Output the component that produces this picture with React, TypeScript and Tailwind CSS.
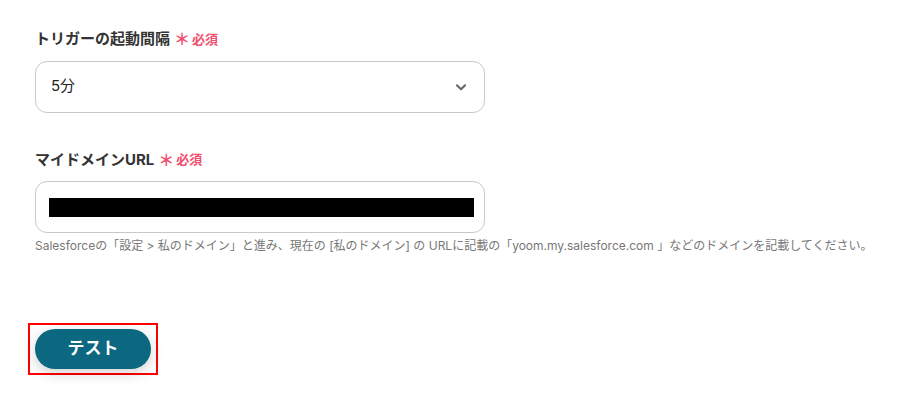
import React from 'react';

const font = { fontFamily: 'Inter, "Noto Sans CJK JP", sans-serif' };

function Required() {
  return (
    <span className="ml-1 inline-flex items-center gap-0.5 text-[13px] font-bold text-[#f0506e]">
      <span className="text-[16px] font-bold leading-none">＊</span>
      必須
    </span>
  );
}

export default function App() {
  return (
    <div className="min-h-[405px] w-[923px] bg-white pl-[35px] pt-[28px]" style={font}>
      {/* Trigger interval */}
      <div className="flex items-center text-[15px] font-bold text-[#333]">
        トリガーの起動間隔
        <Required />
      </div>
      <div className="mt-[10px] flex h-[52px] w-[450px] items-center justify-between rounded-[12px] border border-[#c8c8c8] pl-[15px] pr-[16px] text-[15px] text-[#222]">
        <span>5分</span>
        <svg width="14" height="14" viewBox="0 0 24 24" fill="none" stroke="#666" strokeWidth="3.5" strokeLinecap="round" strokeLinejoin="round">
          <path d="M5 9l7 7 7-7" />
        </svg>
      </div>

      {/* My domain URL */}
      <div className="mt-[36px] flex items-center text-[15px] font-bold text-[#333]">
        マイドメインURL
        <Required />
      </div>
      <div className="mt-[10px] flex h-[52px] w-[450px] items-center rounded-[12px] border border-[#c8c8c8] pl-[13px]">
        <div className="h-[19px] w-[425px] bg-black" />
      </div>
      <p className="mt-[4px] text-[12px] text-[#777]">
        Salesforceの「設定 &gt; 私のドメイン」と進み、現在の [私のドメイン] の URLに記載の「yoom.my.salesforce.com 」などのドメインを記載してください。
      </p>

      <div className="mt-[68px] -ml-[7px] inline-block border-2 border-[#ff0000] px-[5px] py-[4px]">
        <button className="flex h-[40px] w-[116px] items-center justify-center rounded-full bg-[#0b6880] text-[17px] font-bold text-white shadow-[0_4px_14px_rgba(0,0,0,0.18)]">
          テスト
        </button>
      </div>
    </div>
  );
}
